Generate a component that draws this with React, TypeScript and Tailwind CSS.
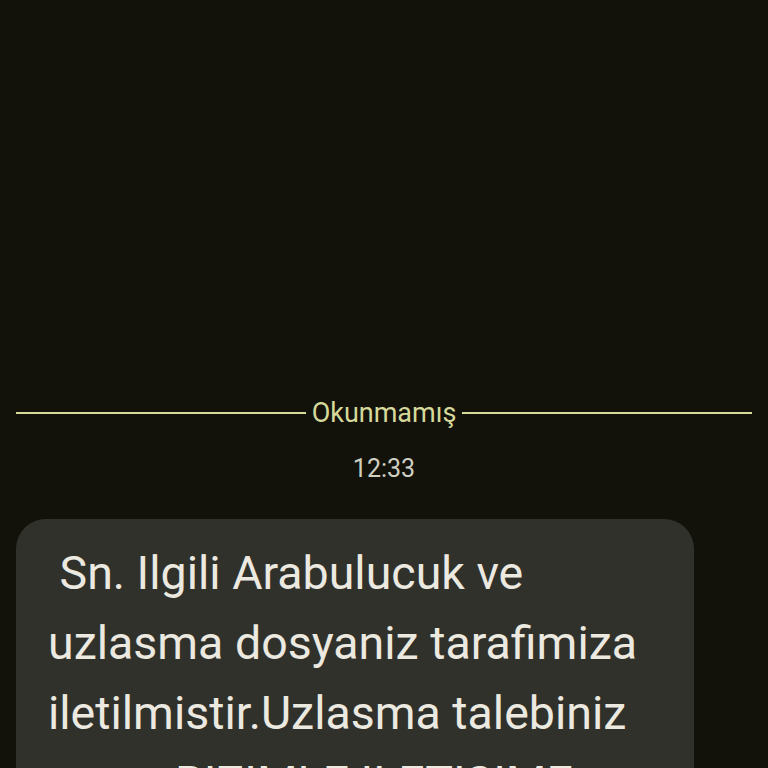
export default function App() {
  const lines = [
    ' Sn. Ilgili Arabulucuk ve',
    'uzlasma dosyaniz tarafimiza',
    'iletilmistir.Uzlasma talebiniz',
    '           BIZIMLE ILETISIME',
  ];
  return (
    <div className="w-[768px] h-[768px] overflow-hidden bg-[#12120a] font-['Roboto',sans-serif]">
      <div className="h-[395px]" />
      <div className="flex items-center gap-[6px] px-4">
        <div className="flex-1 h-[2px] bg-[#d6d99a]" />
        <span className="text-[27px] leading-[36px] text-[#d6d99a]">Okunmamış</span>
        <div className="flex-1 h-[2px] bg-[#d6d99a]" />
      </div>
      <div className="mt-[23px] text-center text-[25px] leading-[30px] text-[#cfcfc2]">12:33</div>
      <div className="mt-[35px] ml-4 w-[678px] rounded-[30px] bg-[#31312b] pl-8 pr-6 pt-[19px] pb-6">
        {lines.map((l, i) => (
          <div key={i} className="whitespace-pre text-[46.5px] leading-[70px] text-[#ebe9e0]">
            {l}
          </div>
        ))}
      </div>
    </div>
  );
}
